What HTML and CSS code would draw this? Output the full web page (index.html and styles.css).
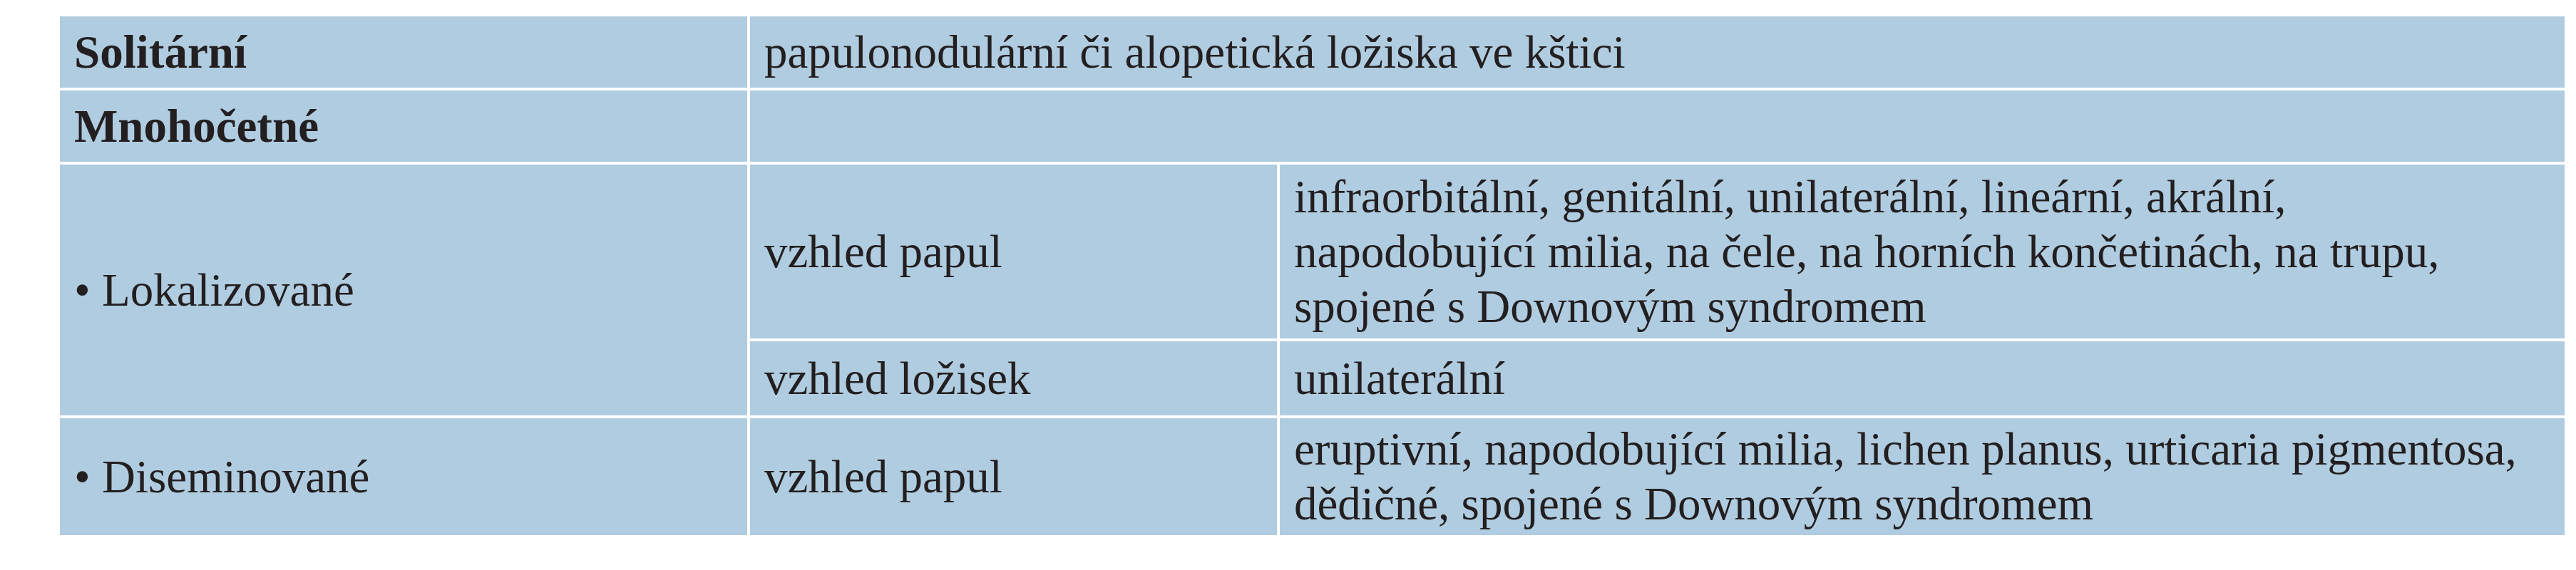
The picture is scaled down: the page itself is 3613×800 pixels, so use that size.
FILE: index.html
```html
<!DOCTYPE html>
<html lang="cs">
<head>
<meta charset="utf-8">
<title>Tabulka</title>
<link rel="stylesheet" href="styles.css">
</head>
<body>
<div class="table">
  <div class="cell head r1">Solitární</div>
  <div class="cell span23 r1">papulonodulární či alopetická ložiska ve kštici</div>

  <div class="cell head r2">Mnohočetné</div>
  <div class="cell span23 r2"></div>

  <div class="cell c1 r3">• Lokalizované</div>
  <div class="cell c2 r3a">vzhled papul</div>
  <div class="cell c3 r3a">infraorbitální, genitální, unilaterální, lineární, akrální,<br>napodobující milia, na čele, na horních končetinách, na trupu,<br>spojené s Downovým syndromem</div>
  <div class="cell c2 r3b">vzhled ložisek</div>
  <div class="cell c3 r3b">unilaterální</div>

  <div class="cell c1 r4">• Diseminované</div>
  <div class="cell c2 r4">vzhled papul</div>
  <div class="cell c3 r4">eruptivní, napodobující milia, lichen planus, urticaria pigmentosa,<br>dědičné, spojené s Downovým syndromem</div>
</div>
</body>
</html>
```

FILE: styles.css
```css
html, body {
  margin: 0;
  padding: 0;
  background: #ffffff;
}

body {
  padding: 23px 16px 0 84px;
  font-family: "Liberation Serif", "Times New Roman", serif;
  font-size: 65px;
  color: #231f20;
}

.table {
  display: grid;
  width: 3513px;
  grid-template-columns: 964px 739px 1802px;
  grid-template-rows: 100px 100px 244px 104px 164px;
  gap: 4px;
}

.cell {
  background: #b0cce0;
  display: flex;
  align-items: center;
  padding: 0 20px;
  line-height: 77px;
  white-space: nowrap;
}

.head {
  font-weight: bold;
  grid-column: 1;
}

.span23 {
  grid-column: 2 / 4;
}

.r1 { grid-row: 1; }
.r2 { grid-row: 2; }
.r3 { grid-row: 3 / 5; }
.r3a { grid-row: 3; }
.r3b { grid-row: 4; }
.r4 { grid-row: 5; }

.c1 { grid-column: 1; }
.c2 { grid-column: 2; }
.c3 { grid-column: 3; }
```
